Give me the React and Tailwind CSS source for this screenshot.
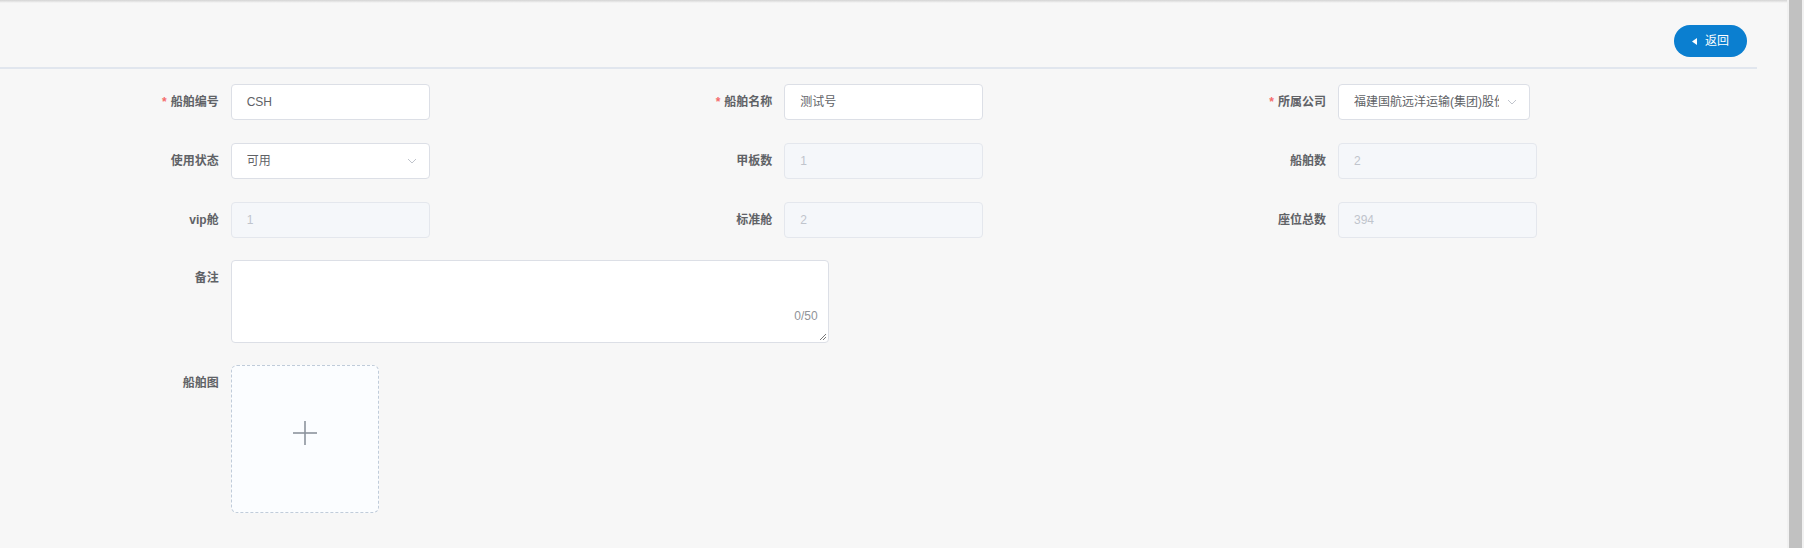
import React from 'react';

const FONT = '"Liberation Sans", "Noto Sans CJK SC", sans-serif';

const Label = ({ children, required }) => (
  <div className="w-[120px] shrink-0 pr-3 text-right text-[12px] font-bold leading-[36px] text-[#606266]">
    {required && <span className="mr-1 text-[#f56c6c]">*</span>}
    {children}
  </div>
);

const Chevron = () => (
  <svg width="10" height="6" viewBox="0 0 10 6" className="shrink-0">
    <polyline points="1,1 5,5 9,1" fill="none" stroke="#c0c4cc" strokeWidth="1" />
  </svg>
);

const TextInput = ({ value, disabled }) => (
  <div
    className={`flex h-[36px] w-[199px] items-center rounded-[4px] border px-[15px] text-[12px] ${
      disabled ? 'border-[#e4e7ed] bg-[#f5f7fa] text-[#c0c4cc]' : 'border-[#dcdfe6] bg-white text-[#606266]'
    }`}
  >
    {value}
  </div>
);

const SelectInput = ({ value, width = 'w-[199px]' }) => (
  <div className={`flex h-[36px] ${width} items-center rounded-[4px] border border-[#dcdfe6] bg-white pl-[15px] pr-[12px] text-[12px] text-[#606266]`}>
    <span className="flex-1 overflow-hidden whitespace-nowrap">{value}</span>
    <span className="ml-2"><Chevron /></span>
  </div>
);

const Field = ({ label, required, children }) => (
  <div className="flex items-start">
    <Label required={required}>{label}</Label>
    {children}
  </div>
);

export default function App() {
  return (
    <div className="flex h-[548px] w-full overflow-hidden bg-[#f7f7f7]" style={{ fontFamily: FONT }}>
      <div className="flex-1">
        <div className="h-[3px] bg-gradient-to-b from-[#d4d4d4] to-[#f7f7f7]" />
        {/* header */}
        <div className="w-[1757px]">
          <div className="flex h-[64px] justify-end pr-[10px] pt-[22px]">
            <button className="flex h-[32px] w-[73px] items-center justify-center gap-[8px] rounded-full bg-[#0b7fd0] text-[12px] text-white">
              <svg width="5" height="7" viewBox="0 0 5 7">
                <polygon points="5,0 5,7 0,3.5" fill="#fff" />
              </svg>
              返回
            </button>
          </div>
          <div className="h-[2px] bg-[#e1e6ee]" />
        </div>

        {/* form */}
        <div className="ml-[110.67px] w-[1661px] pt-[15px]">
          <div className="grid grid-cols-3 gap-y-[23px]">
            <Field label="船舶编号" required><TextInput value="CSH" /></Field>
            <Field label="船舶名称" required><TextInput value="测试号" /></Field>
            <Field label="所属公司" required><SelectInput value="福建国航远洋运输(集团)股份有限公司" width="w-[192px]" /></Field>

            <Field label="使用状态"><SelectInput value="可用" /></Field>
            <Field label="甲板数"><TextInput value="1" disabled /></Field>
            <Field label="船舶数"><TextInput value="2" disabled /></Field>

            <Field label="vip舱"><TextInput value="1" disabled /></Field>
            <Field label="标准舱"><TextInput value="2" disabled /></Field>
            <Field label="座位总数"><TextInput value="394" disabled /></Field>
          </div>

          <div className="mt-[22px] flex items-start">
            <Label>备注</Label>
            <div className="relative h-[83px] w-[598px] rounded-[4px] border border-[#dcdfe6] bg-white">
              <span className="absolute bottom-[17px] right-[10px] text-[12px] text-[#909399]">0/50</span>
              <svg width="8" height="8" viewBox="0 0 8 8" className="absolute bottom-[1px] right-[1px]">
                <line x1="1" y1="7" x2="7" y2="1" stroke="#555" strokeWidth="0.8" />
                <line x1="4" y1="7" x2="7" y2="4" stroke="#555" strokeWidth="0.8" />
              </svg>
            </div>
          </div>

          <div className="mt-[22px] flex items-start">
            <Label>船舶图</Label>
            <div className="flex h-[148px] w-[148px] items-center justify-center rounded-[6px] border border-dashed border-[#c0ccda] bg-[#fbfdff] pb-[12px]">
              <svg width="24" height="24" viewBox="0 0 24 24">
                <line x1="0" y1="12" x2="24" y2="12" stroke="#8c939d" strokeWidth="1.6" />
                <line x1="12" y1="0" x2="12" y2="24" stroke="#8c939d" strokeWidth="1.6" />
              </svg>
            </div>
          </div>
        </div>
      </div>

      {/* scrollbar */}
      <div className="flex h-full w-[17px] shrink-0 bg-[#f1f1f1] px-[2px]">
        <div className="h-full w-full bg-[#c1c1c1]" />
      </div>
    </div>
  );
}
